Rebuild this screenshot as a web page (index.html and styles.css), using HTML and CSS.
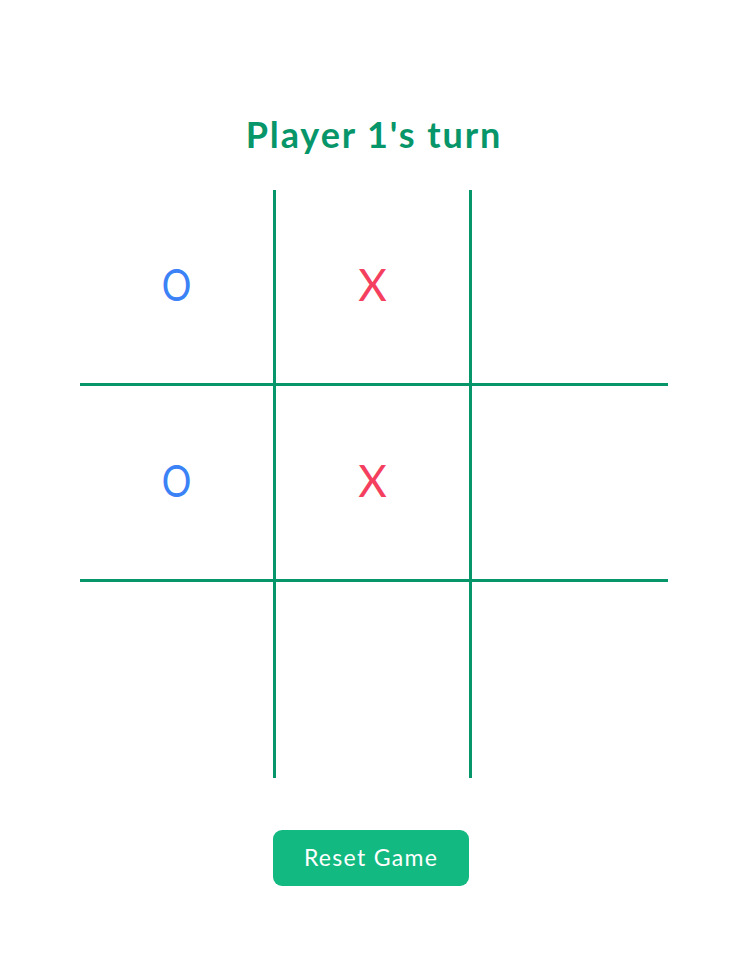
FILE: index.html
```html
<!DOCTYPE html>
<html lang="en">
<head>
<meta charset="utf-8">
<title>Tic Tac Toe</title>
<link rel="stylesheet" href="styles.css">
</head>
<body>
<main class="game">
  <h1 class="status">Player 1's turn</h1>
  <div class="board">
    <div class="cell"><span class="mark mark-o">O</span></div>
    <div class="cell"><span class="mark mark-x">X</span></div>
    <div class="cell"></div>
    <div class="cell"><span class="mark mark-o">O</span></div>
    <div class="cell"><span class="mark mark-x">X</span></div>
    <div class="cell"></div>
    <div class="cell"></div>
    <div class="cell"></div>
    <div class="cell"></div>
  </div>
  <button class="reset" type="button">Reset Game</button>
</main>
</body>
</html>
```
FILE: styles.css
```css
* { box-sizing: border-box; }
html, body { margin: 0; padding: 0; background: #ffffff; }
body { font-family: "Lato", "Open Sans", sans-serif; }

.game {
  width: 588px;
  margin-left: 80px;
  padding-top: 110px;
  display: flex;
  flex-direction: column;
  align-items: center;
}

.status {
  margin: 0;
  font-size: 36px;
  line-height: 48px;
  font-weight: 700;
  color: #079669;
  letter-spacing: 1.9px;
}

.board {
  margin-top: 32px;
  width: 588px;
  display: grid;
  grid-template-columns: repeat(3, 196px);
  grid-template-rows: repeat(3, 196px);
}

.cell {
  display: flex;
  align-items: center;
  justify-content: center;
  border-color: #079669;
  border-style: solid;
  border-width: 0 3px 3px 0;
}
.cell:nth-child(3n) { border-right-width: 0; }
.cell:nth-child(n+7) { border-bottom-width: 0; }

.mark {
  display: inline-block;
  margin-bottom: 6px;
  font-size: 44px;
  font-weight: 400;
  line-height: 1;
}
.mark-o { color: #3b82f6; transform: scaleX(0.84); }
.mark-x { color: #f43f5e; }

.reset {
  margin-top: 52px;
  margin-right: 6px;
  width: 196px;
  height: 56px;
  padding: 0 0 2px;
  border: none;
  border-radius: 9px;
  background: #12b981;
  color: #ffffff;
  font-family: "Lato", "Open Sans", sans-serif;
  font-size: 23px;
  font-weight: 400;
  letter-spacing: 1.3px;
}
```
